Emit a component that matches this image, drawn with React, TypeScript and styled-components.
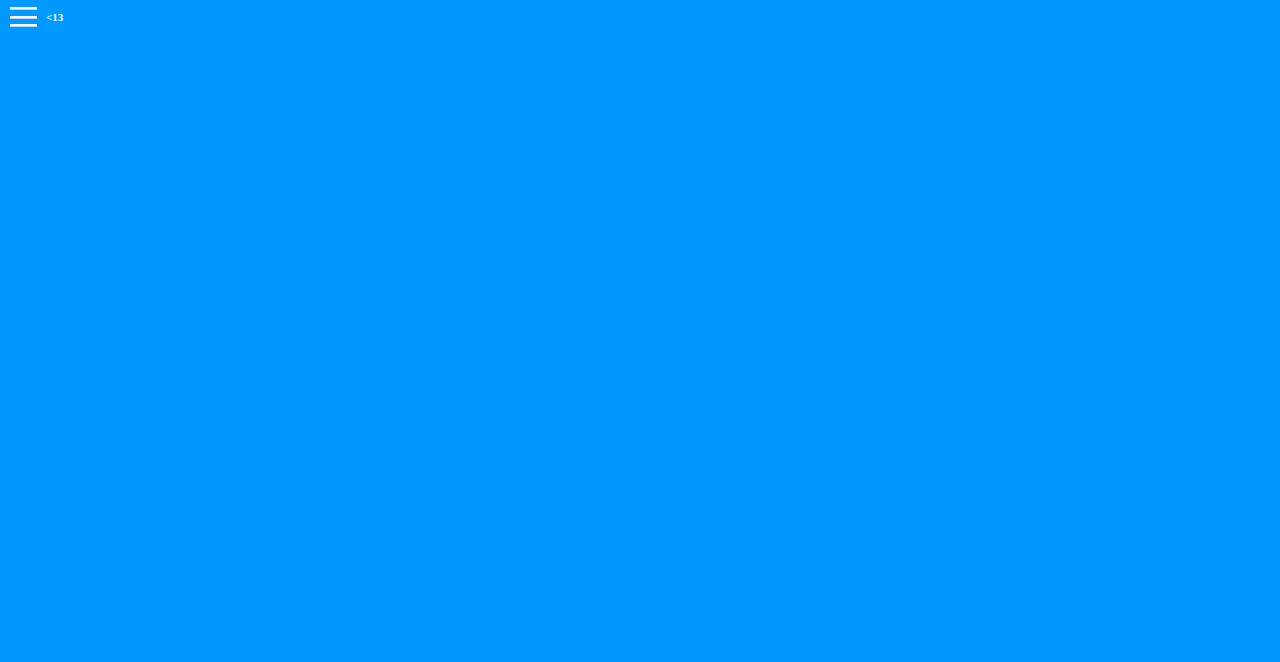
import React from 'react'
import styled, { createGlobalStyle } from 'styled-components'

const GlobalStyle = createGlobalStyle`
  html, body {
    margin: 0;
    padding: 0;
    height: 100%;
    background: #0099ff;
  }
  #root {
    height: 100%;
  }
`

const Page = styled.div`
  min-height: 100vh;
  background: #0099ff;
  font-family: "Liberation Serif", "Times New Roman", serif;
`

const TopBar = styled.header`
  display: flex;
  align-items: center;
  gap: 9px;
  padding: 7px 0 0 10px;
`

const MenuButton = styled.button`
  display: flex;
  flex-direction: column;
  justify-content: space-between;
  width: 27px;
  height: 19px;
  padding: 0;
  border: none;
  background: transparent;
  cursor: pointer;
`

const Bar = styled.span`
  display: block;
  width: 100%;
  height: 2px;
  background: #fff;
  box-shadow: 0 1px 0 rgba(220, 230, 240, 0.8);
`

const Counter = styled.span`
  color: #fff;
  font-size: 11px;
  font-weight: bold;
  line-height: 1;
  margin-top: 2px;
`

export default function App() {
  return (
    <>
      <GlobalStyle />
      <Page>
        <TopBar>
          <MenuButton aria-label="menu">
            <Bar />
            <Bar />
            <Bar />
          </MenuButton>
          <Counter>&lt;13</Counter>
        </TopBar>
      </Page>
    </>
  )
}
